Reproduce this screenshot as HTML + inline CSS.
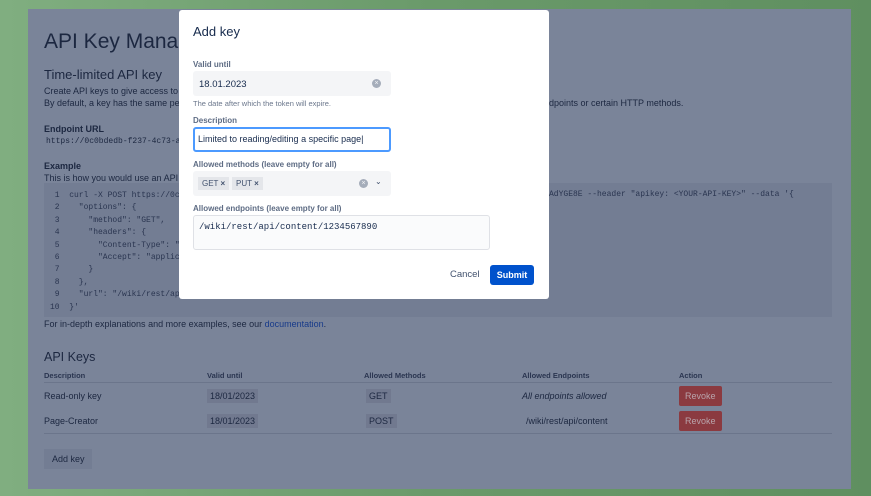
<!DOCTYPE html>
<html><head><meta charset="utf-8"><style>
*{box-sizing:border-box;margin:0;padding:0}
body{width:871px;height:496px;overflow:hidden;background:linear-gradient(90deg,#80ae80,#6a9a6a 50%,#5f8f60);font-family:"Liberation Sans",sans-serif;position:relative;color:#1c2740}
.p{position:absolute;left:28px;top:9px;width:823px;height:480px;background:#7a8499}
.a{position:absolute;white-space:nowrap}
.mono{font-family:"Liberation Mono",monospace}
.code{position:absolute;left:44px;top:183px;width:788px;height:134px;background:#737d93}
.tag{background:#71798f;padding:2px 3px}
.btn{background:#8b3a40;color:#b9a4ab;font-size:9px;padding:5px 6px;border-radius:2px}
.m{position:absolute;left:179px;top:10px;width:370px;height:289px;background:#fff;border-radius:3px}
.in{position:absolute;background:#f4f5f7;border-radius:3px}
.lbl{font-size:8px;color:#5e6c84;font-weight:bold}
</style></head><body>
<div class="p"></div>
<div class="a" style="left:44px;top:30px;font-size:21px">API Key Management</div>
<div class="a" style="left:44px;top:67px;font-size:13px">Time-limited API key</div>
<div class="a" style="left:44px;top:86px;font-size:9px">Create API keys to give access to</div>
<div class="a" style="left:44px;top:98px;font-size:9px">By default, a key has the same pe</div>
<div class="a" style="left:549px;top:98px;font-size:9px">dpoints or certain HTTP methods.</div>
<div class="a" style="left:44px;top:124px;font-size:9px;font-weight:bold">Endpoint URL</div>
<div class="a mono" style="left:46px;top:137px;font-size:8px">https://0c0bdedb-f237-4c73-a</div>
<div class="a" style="left:44px;top:161px;font-size:9px;font-weight:bold">Example</div>
<div class="a" style="left:44px;top:173px;font-size:9px">This is how you would use an API</div>
<div class="code"></div>
<div class="a mono" style="left:50px;top:190px;font-size:8px;line-height:12.4px;color:#2a3550">
&nbsp;1&nbsp;&nbsp;curl -X POST https://0c0<br>&nbsp;2&nbsp;&nbsp;&nbsp;&nbsp;"options": {<br>&nbsp;3&nbsp;&nbsp;&nbsp;&nbsp;&nbsp;&nbsp;"method": "GET",<br>&nbsp;4&nbsp;&nbsp;&nbsp;&nbsp;&nbsp;&nbsp;"headers": {<br>&nbsp;5&nbsp;&nbsp;&nbsp;&nbsp;&nbsp;&nbsp;&nbsp;&nbsp;"Content-Type": "a<br>&nbsp;6&nbsp;&nbsp;&nbsp;&nbsp;&nbsp;&nbsp;&nbsp;&nbsp;"Accept": "applica<br>&nbsp;7&nbsp;&nbsp;&nbsp;&nbsp;&nbsp;&nbsp;}<br>&nbsp;8&nbsp;&nbsp;&nbsp;&nbsp;},<br>&nbsp;9&nbsp;&nbsp;&nbsp;&nbsp;"url": "/wiki/rest/api<br>10&nbsp;&nbsp;}'</div>
<div class="a mono" style="left:549px;top:190px;font-size:8px;color:#2a3550">AdYGE8E --header "apikey: &lt;YOUR-API-KEY&gt;" --data '{</div>
<div class="a" style="left:44px;top:319px;font-size:9px">For in-depth explanations and more examples, see our <span style="color:#173a8a">documentation</span>.</div>
<div class="a" style="left:44px;top:350px;font-size:12.5px">API Keys</div>
<div class="a" style="left:44px;top:371px;font-size:7.5px;color:#2a3550;font-weight:bold">Description</div>
<div class="a" style="left:207px;top:371px;font-size:7.5px;color:#2a3550;font-weight:bold">Valid until</div>
<div class="a" style="left:364px;top:371px;font-size:7.5px;color:#2a3550;font-weight:bold">Allowed Methods</div>
<div class="a" style="left:522px;top:371px;font-size:7.5px;color:#2a3550;font-weight:bold">Allowed Endpoints</div>
<div class="a" style="left:679px;top:371px;font-size:7.5px;color:#2a3550;font-weight:bold">Action</div>
<div class="a" style="left:44px;top:382px;width:788px;border-top:1px solid #6b758b"></div>
<div class="a" style="left:44px;top:391px;font-size:9px">Read-only key</div>
<div class="a tag" style="left:207px;top:389px;font-size:9px">18/01/2023</div>
<div class="a tag" style="left:366px;top:389px;font-size:9px">GET</div>
<div class="a" style="left:522px;top:391px;font-size:9px;font-style:italic">All endpoints allowed</div>
<div class="a btn" style="left:679px;top:386px">Revoke</div>
<div class="a" style="left:44px;top:416px;font-size:9px">Page-Creator</div>
<div class="a tag" style="left:207px;top:414px;font-size:9px">18/01/2023</div>
<div class="a tag" style="left:366px;top:414px;font-size:9px">POST</div>
<div class="a" style="left:526px;top:416px;font-size:9px">/wiki/rest/api/content</div>
<div class="a btn" style="left:679px;top:411px">Revoke</div>
<div class="a" style="left:44px;top:433px;width:788px;border-top:1px solid #6b758b"></div>
<div class="a" style="left:44px;top:449px;width:48px;height:20px;background:#737d93;font-size:9px;padding:5px 8px">Add key</div>

<div class="m">
<div class="a" style="left:14px;top:14px;font-size:13px;color:#172b4d">Add key</div>
<div class="a lbl" style="left:14px;top:50px">Valid until</div>
<div class="in" style="left:14px;top:61px;width:198px;height:25px"><span class="a" style="left:6px;top:8px;font-size:9.5px;color:#172b4d">18.01.2023</span><span class="a" style="left:179px;top:8px;width:9px;height:9px;border-radius:50%;background:#a5adba;color:#f4f5f7;font-size:7px;line-height:9px;text-align:center">×</span></div>
<div class="a" style="left:14px;top:89px;font-size:7.5px;color:#6b778c">The date after which the token will expire.</div>
<div class="a lbl" style="left:14px;top:106px">Description</div>
<div class="a" style="left:14px;top:117px;width:198px;height:25px;border:2px solid #4c9aff;border-radius:3px;background:#fff;font-size:9px;padding:5px 3px;color:#172b4d">Limited to reading/editing a specific page|</div>
<div class="a lbl" style="left:14px;top:150px">Allowed methods (leave empty for all)</div>
<div class="in" style="left:14px;top:161px;width:198px;height:25px">
<span class="a" style="left:5px;top:6px;background:#e4e6ea;font-size:8px;padding:2px 4px;color:#42526e">GET <b>×</b></span>
<span class="a" style="left:39px;top:6px;background:#e4e6ea;font-size:8px;padding:2px 4px;color:#42526e">PUT <b>×</b></span>
<span class="a" style="left:166px;top:8px;width:9px;height:9px;border-radius:50%;background:#a5adba;color:#f4f5f7;font-size:7px;line-height:9px;text-align:center">×</span>
<span class="a" style="left:182px;top:6px;font-size:8px;color:#42526e">⌄</span></div>
<div class="a lbl" style="left:14px;top:194px">Allowed endpoints (leave empty for all)</div>
<div class="a mono" style="left:14px;top:205px;width:297px;height:35px;border:1px solid #dfe1e6;border-radius:3px;background:#fafbfc;font-size:9px;padding:6px 5px;color:#172b4d">/wiki/rest/api/content/1234567890</div>
<div class="a" style="left:271px;top:259px;font-size:9.5px;color:#42526e">Cancel</div>
<div class="a" style="left:311px;top:255px;width:44px;height:20px;background:#0052cc;border-radius:3px;color:#fff;font-size:9px;font-weight:bold;text-align:center;line-height:20px">Submit</div>
</div>
</body></html>
